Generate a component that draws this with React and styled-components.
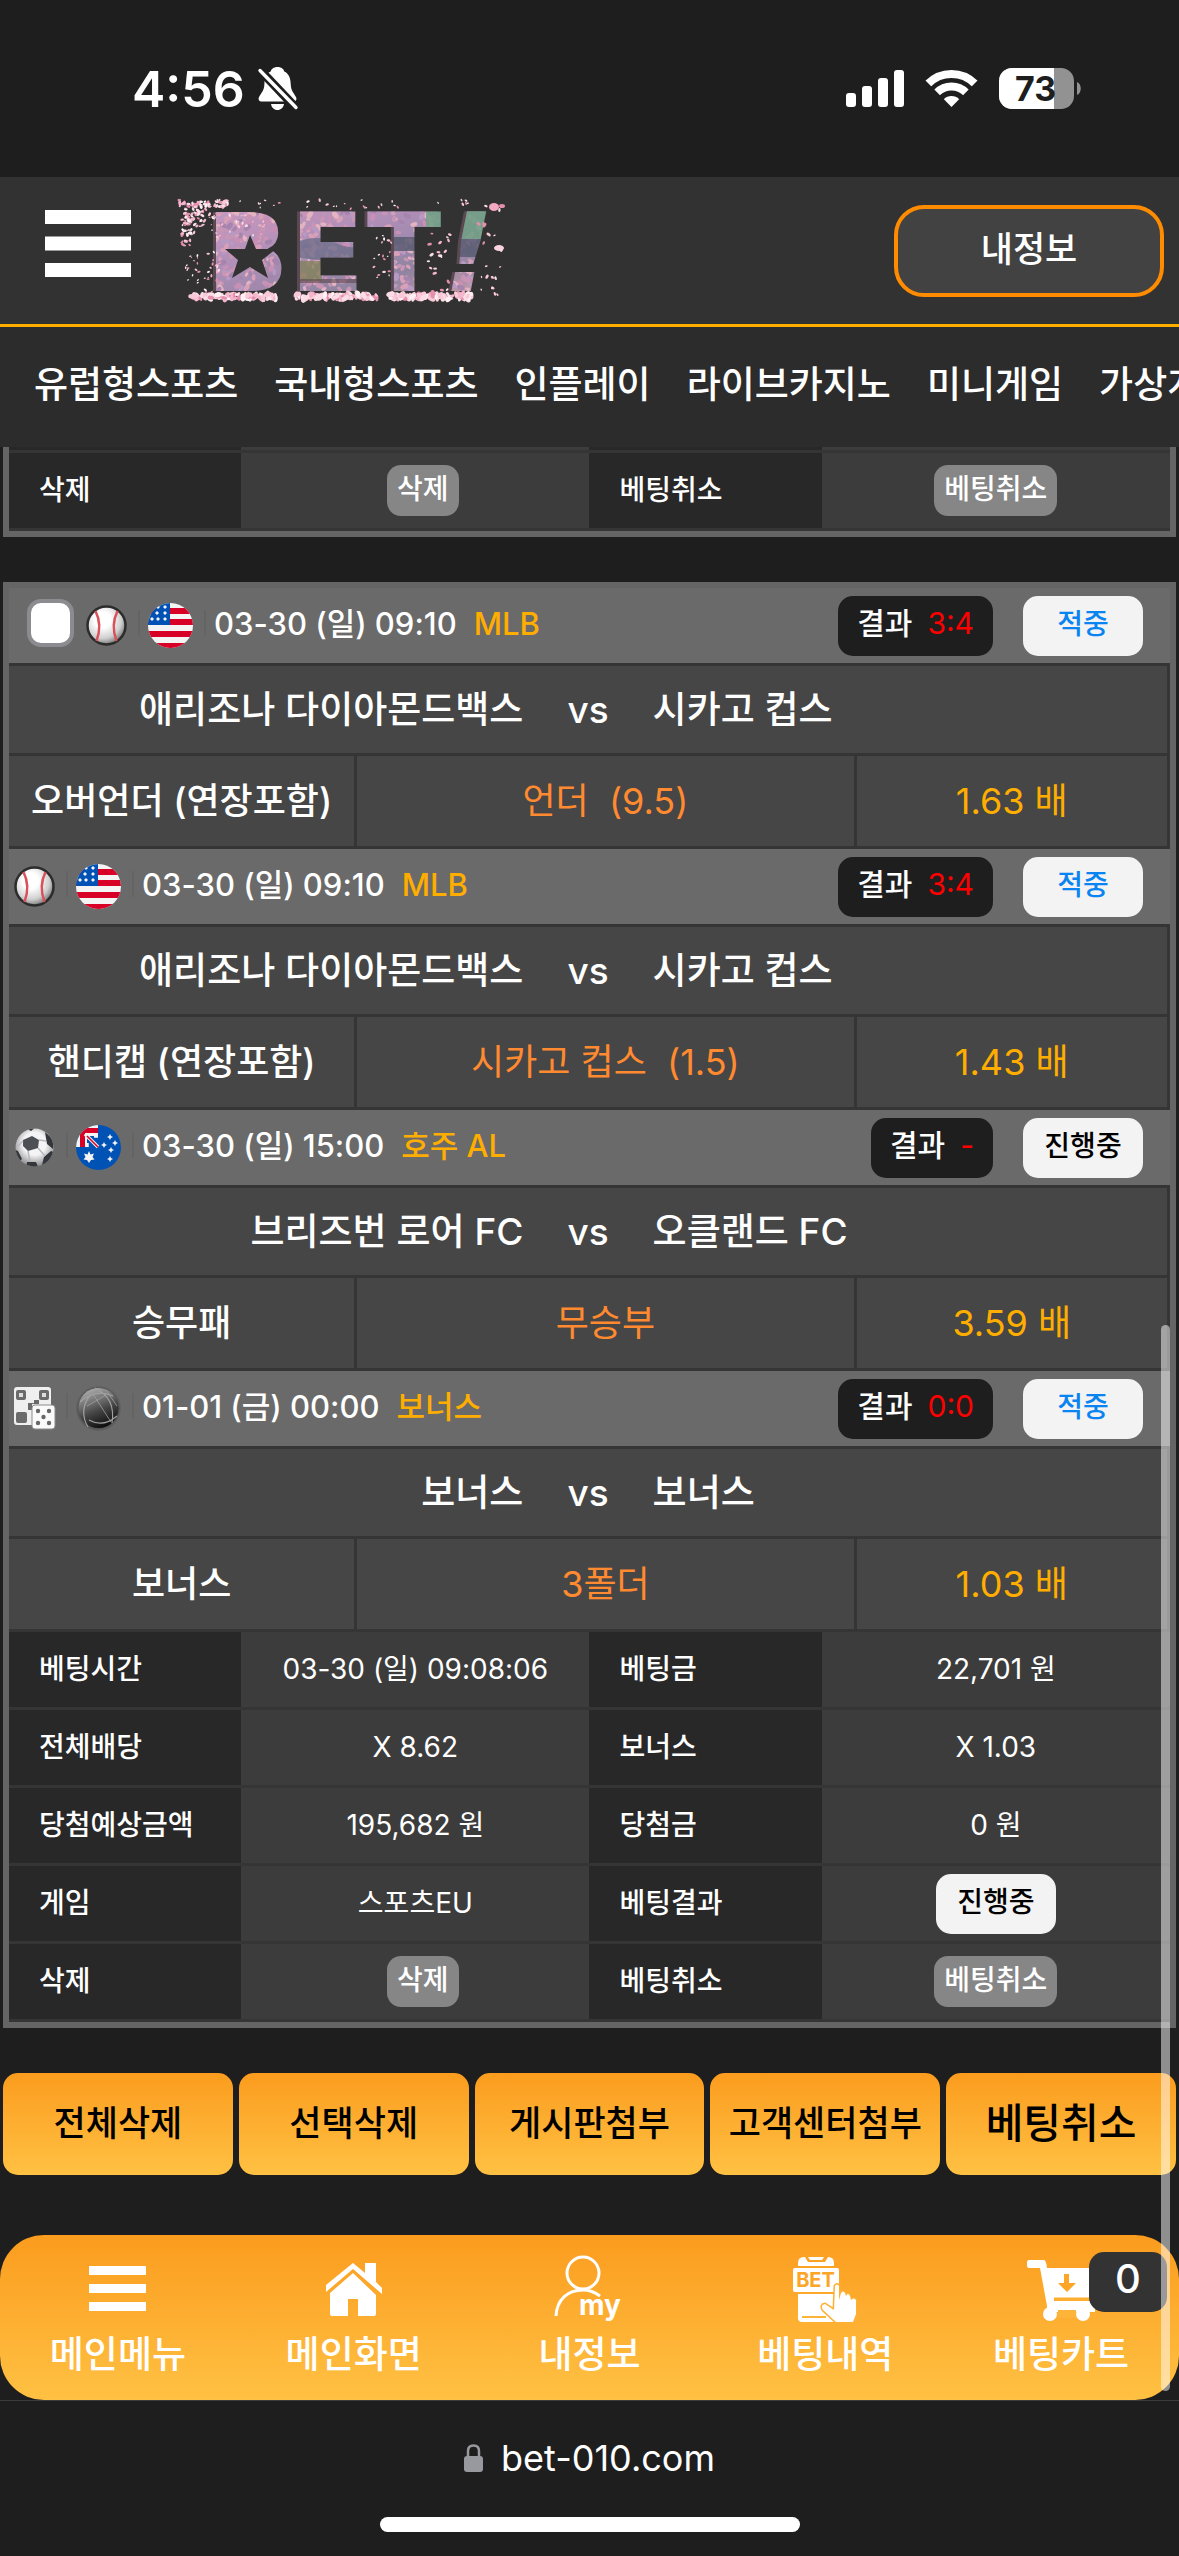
import React from "react";
import styled, { createGlobalStyle } from "styled-components";

const GlobalStyle = createGlobalStyle`
  *, *::before, *::after { box-sizing: border-box; }
  body {
    margin: 0;
    background: #1e1e1e;
    color: #fff;
    font-family: Inter, "Noto Sans CJK KR", sans-serif;
    font-weight: 500;
  }
  button, input { font: inherit; color: inherit; margin: 0; }
  svg { display: block; flex: none; overflow: visible; }
`;

const Screen = styled.div`
  position: relative;
  min-height: 100vh;
  display: flex;
  flex-direction: column;
  overflow: hidden;
`;

/* ---------- status bar ---------- */

const StatusBar = styled.div`
  height: 177px;
  padding: 0 98px 0 132px;
  display: flex;
  align-items: center;
  justify-content: space-between;
`;

const StatusGroup = styled.div`
  display: flex;
  align-items: center;
  gap: ${(p) => p.$gap}px;
`;

const Clock = styled.span`
  font-size: 50px;
  font-weight: 600;
  line-height: 60px;
`;

/* ---------- header ---------- */

const Header = styled.header`
  height: 150px;
  padding: 0 15px 0 45px;
  display: flex;
  align-items: center;
  background: #323232;
  border-bottom: 3px solid #ffae00;
`;

const MenuButton = styled.button`
  padding: 0 0 14px;
  border: 0;
  background: none;
`;

const LogoLink = styled.a`
  margin-left: 47px;
`;

const InfoButton = styled.button`
  width: 270px;
  height: 92px;
  margin-left: auto;
  padding: 0 0 8px;
  border: 4px solid #ff8c00;
  border-radius: 30px;
  background: #424242;
  font-size: 35px;
`;

const TopNav = styled.nav`
  height: 120px;
  padding: 0 0 4px 34px;
  display: flex;
  align-items: center;
  gap: 36px;
  overflow: hidden;
  background: #2c2c2c;
`;

const TopLink = styled.a`
  flex: none;
  color: #fff;
  font-size: 37px;
  line-height: 48px;
  white-space: nowrap;
  text-decoration: none;
`;

/* ---------- betting cards ---------- */

const Content = styled.main`
  padding: 0 3px;
  display: flex;
  flex-direction: column;
  gap: 45px;
`;

const Card = styled.section`
  border: 6px solid #656565;
  border-top-width: ${(p) => (p.$continued ? 0 : 6)}px;
`;

const MatchHead = styled.div`
  height: 78px;
  padding: 0 27px 0 5px;
  display: flex;
  align-items: center;
  background: #6a6a6a;
  border-bottom: 3px solid #353535;
  font-size: 31px;
  line-height: 40px;
`;

const Check = styled.input`
  appearance: none;
  width: 47px;
  height: 48px;
  && { margin: 0 12px 6px 13px; }
  border: 4px solid #8b8b90;
  border-radius: 14px;
  background: #fff;
`;

const Divider = styled.i`
  width: 2px;
  height: 26px;
  margin: 0 8px 6px 11px;
  background: #646464;
`;

const League = styled.span`
  margin-left: 17px;
  color: #ffae00;
`;

const HeadText = styled.div`
  padding-bottom: 4px;
  white-space: nowrap;
`;

const HeadBadges = styled.div`
  margin-left: auto;
  display: flex;
  gap: 30px;
`;

const ResultBadge = styled.span`
  height: 60px;
  padding: 0 19px 5px;
  display: flex;
  align-items: center;
  gap: 15px;
  border-radius: 15px;
  background: #1e1e1e;
  font-size: 30px;
`;

const Score = styled.b`
  color: #f00;
  font-weight: 400;
`;

const StateBadge = styled.span`
  width: 120px;
  height: 60px;
  padding-bottom: 4px;
  display: inline-flex;
  align-items: center;
  justify-content: center;
  border-radius: 15px;
  background: #f3f3f3;
  color: ${(p) => (p.$win ? "#0a84f0" : "#000")};
  font-size: 28px;
  line-height: 40px;
`;

const Teams = styled.div`
  height: 90px;
  display: grid;
  grid-template-columns: 1fr auto 1fr;
  column-gap: 44px;
  align-items: center;
  background: #464646;
  border: solid #353535;
  border-width: 0 3px 3px 0;
  font-size: 37px;
  line-height: 48px;
  white-space: nowrap;
`;

const Home = styled.span`
  text-align: right;
`;

const Pick = styled.div`
  height: 93px;
  display: grid;
  grid-template-columns: 30fr 43fr 27fr;
  background: #464646;
  border-bottom: 3px solid #353535;
  font-size: 36px;
  line-height: 48px;
  white-space: pre;
`;

const PickCell = styled.span`
  display: flex;
  align-items: center;
  justify-content: center;
  border-right: 3px solid #353535;
  color: ${(p) => p.$color || "#fff"};
  font-weight: ${(p) => (p.$color ? 400 : 500)};
`;

const InfoTable = styled.table`
  width: 100%;
  table-layout: fixed;
  border-collapse: separate;
  border-spacing: 0;
  font-size: 28px;
  line-height: 40px;
`;

const InfoLabel = styled.th`
  width: 20%;
  height: ${(p) => (p.$edge ? 6 : 78)}px;
  padding: 0 0 ${(p) => (p.$edge ? 0 : 2)}px 30px;
  background: #282828;
  border-bottom: 3px solid #353535;
  font-weight: 500;
  text-align: left;
  white-space: nowrap;
`;

const InfoValue = styled.td`
  width: 30%;
  padding: 0 0 ${(p) => (p.$text ? 2 : 0)}px ${(p) => (p.$indent ? 15 : 0)}px;
  background: #3c3c3c;
  border-bottom: 3px solid #353535;
  text-align: center;
  vertical-align: middle;
  white-space: nowrap;
  font-weight: 400;
`;

const SmallButton = styled.button`
  height: 51px;
  padding: 0 10px 4px;
  border: 0;
  border-radius: 14px;
  background: #868686;
  display: inline-block;
  vertical-align: middle;
  && { font-weight: 500; }
`;

const Middle = styled.div`
  display: flex;
  justify-content: center;
  font-weight: 500;
`;

/* ---------- actions ---------- */

const Actions = styled.div`
  display: grid;
  grid-template-columns: repeat(5, 1fr);
  gap: 6px;
`;

const ActionButton = styled.button`
  height: 102px;
  padding: 0 0 8px;
  border: 0;
  border-radius: 15px;
  background: linear-gradient(#fb9c1e, #ffc143);
  && {
    color: #000;
    font-size: ${(p) => (p.$large ? 41 : 35)}px;
  }
  white-space: nowrap;
`;

/* ---------- bottom navigation ---------- */

const BottomNav = styled.nav`
  position: relative;
  height: 165px;
  margin-top: 60px;
  display: grid;
  grid-template-columns: repeat(5, 1fr);
  border-radius: 44px;
  background: linear-gradient(#fb9c1e, #ffc143);
`;

const BottomLink = styled.a`
  padding-top: 20px;
  display: flex;
  flex-direction: column;
  align-items: center;
  gap: 6px;
  color: #fff;
  font-size: 37px;
  line-height: 48px;
  white-space: nowrap;
  text-decoration: none;
`;

const CartCount = styled.span`
  position: absolute;
  top: 17px;
  right: 12px;
  width: 78px;
  height: 60px;
  border-radius: 15px;
  background: #333;
  font-size: 40px;
  line-height: 54px;
  text-align: center;
`;

const BrowserBar = styled.footer`
  padding: 27px 0 24px;
  display: flex;
  flex-direction: column;
  align-items: center;
  gap: 29px;
  border-top: 1px solid #3c3c3c;
  font-weight: 400;
`;

const Address = styled.div`
  display: flex;
  align-items: center;
  gap: 18px;
  font-size: 36px;
  line-height: 60px;
`;

const HomeIndicator = styled.div`
  width: 420px;
  height: 15px;
  border-radius: 8px;
  background: #fff;
`;

const ScrollThumb = styled.div`
  position: absolute;
  top: 1325px;
  right: 9px;
  bottom: 165px;
  width: 9px;
  border-radius: 5px;
  background: rgba(255, 255, 255, 0.5);
`;

/* ---------- drawings ---------- */

const Bell = () => (
  <svg width="40" height="43" viewBox="0 0 40 43" aria-hidden="true">
    <path fill="#fff" d="M19.5 0c-4 0-6.300 2.200-6.800 4.600C8 6.500 6.600 11 6.400 17 6.200 24 3 26 .8 30.500.1 32.500 1 34.500 3.500 34.500h32c2.500 0 3.500-2 2.700-4C36 26 32.900 24 32.700 17c-.2-6-2-10.500-6.400-12.400C25.800 2.200 23.500 0 19.500 0zM13 37h13c-.6 3.500-3 6-6.500 6S13.600 40.500 13 37z" />
    <path d="M2 3 38 41" stroke="#1e1e1e" strokeWidth="9" />
    <path d="M2 3.500 38 40.500" stroke="#fff" strokeWidth="3.400" strokeLinecap="round" />
  </svg>
);

const Signal = () => (
  <svg width="58" height="37" viewBox="0 0 58 37" fill="#fff" aria-hidden="true">
    <rect x="0" y="23" width="10" height="14" rx="3" />
    <rect x="16" y="16" width="10" height="21" rx="3" />
    <rect x="32" y="8" width="10" height="29" rx="3" />
    <rect x="48" y="0" width="10" height="37" rx="3" />
  </svg>
);

const Wifi = () => (
  <svg width="51" height="37" viewBox="0 0 51 37" fill="none" stroke="#fff" aria-hidden="true">
    <clipPath id="wifi-wedge"><path d="M25.500 37-2 9V-2h55V9z" /></clipPath>
    <g clipPath="url(#wifi-wedge)">
      <circle cx="25.500" cy="37" r="33" strokeWidth="8" />
      <circle cx="25.500" cy="37" r="20.500" strokeWidth="8" />
      <circle cx="25.500" cy="37" r="11" fill="#fff" stroke="none" />
    </g>
  </svg>
);

const Battery = () => (
  <svg width="82" height="41" viewBox="0 0 82 41" role="img" aria-label="73%">
    <clipPath id="battery-shape"><rect width="75" height="41" rx="13" /></clipPath>
    <g clipPath="url(#battery-shape)">
      <rect width="75" height="41" fill="#929292" />
      <rect width="55" height="41" fill="#fff" />
    </g>
    <path d="M78 14c5 2 5 11 0 13z" fill="#929292" />
    <text x="36.500" y="33" textAnchor="middle" fontSize="34" fontWeight="700" fill="#1e1e1e">73</text>
  </svg>
);

const Bars = ({ width, height, bar }) => {
  const step = (height - bar) / 2;
  return (
    <svg width={width} height={height} fill="#fff" aria-hidden="true">
      {[0, 1, 2].map((i) => <rect key={i} y={i * step} width={width} height={bar} />)}
    </svg>
  );
};

const PINKS = ["#f4b6cc", "#fbdde6", "#e58fae", "#f9c9d8", "#fff0f4"];

function scatter(seed, count, x0, y0, x1, y1, size) {
  let s = seed;
  const next = () => {
    s = (s * 16807) % 2147483647;
    return s / 2147483647;
  };
  for (let i = 0; i < 5; i += 1) next();
  return Array.from({ length: count }, (_, i) => ({
    key: `${seed}-${i}`,
    x: Math.round((x0 + next() * (x1 - x0)) * 10) / 10,
    y: Math.round((y0 + next() * (y1 - y0)) * 10) / 10,
    r: size * (0.5 + next() * 0.6),
    a: Math.round(next() * 180),
    c: PINKS[Math.floor(next() * PINKS.length)],
  }));
}

const Petals = ({ items }) =>
  items.map((p) => (
    <ellipse key={p.key} cx={p.x} cy={p.y} rx={p.r} ry={p.r * 0.6} fill={p.c} transform={`rotate(${p.a} ${p.x} ${p.y})`} />
  ));

const CLOUD = ["#c98fb4", "#b79ac4", "#d7a0b8", "#a585ae", "#e3b3c0", "#c896b4"];
const texture = scatter(771, 620, 20, 12, 312, 92, 4).map((p, i) => ({ ...p, c: CLOUD[i % CLOUD.length] }));
const petals = [
  ...scatter(11, 50, 1, 1, 52, 8, 2.400),
  ...scatter(29, 46, 4, 8, 32, 28, 2.400),
  ...scatter(37, 22, 2, 26, 18, 50, 2.200),
  ...scatter(43, 34, 30, 14, 88, 40, 1.800),
  ...scatter(59, 36, 4, 50, 46, 94, 1.600),
  ...scatter(67, 30, 60, 1, 290, 10, 1.800),
  ...scatter(73, 80, 14, 95, 98, 100, 4),
  ...scatter(83, 80, 118, 95, 200, 100, 4),
  ...scatter(97, 80, 210, 95, 294, 100, 4),
  ...scatter(103, 18, 196, 34, 214, 80, 1.800),
  ...scatter(113, 18, 248, 34, 274, 92, 2.200),
  ...scatter(127, 22, 300, 4, 324, 98, 2.400),
];

const Logo = () => (
  <svg width="328" height="103" viewBox="0 0 328 103" role="img" aria-label="BET!">
    <defs>
      <linearGradient id="blossom" x1="0" y1="0" x2="1" y2="1">
        <stop offset="0" stopColor="#d59cc0" />
        <stop offset="0.400" stopColor="#b08fb8" />
        <stop offset="0.700" stopColor="#8f84a0" />
        <stop offset="1" stopColor="#d8a3a8" />
      </linearGradient>
      <pattern id="garden" width="328" height="103" patternUnits="userSpaceOnUse">
        <rect width="328" height="103" fill="url(#blossom)" />
        <Petals items={texture} />
        <path d="M118 44q20-10 40 0t42-4v16q-40 10-82 2z" fill="#666a85" opacity="0.700" />
        <path d="M120 62h24v20h-24z" fill="#7d8150" opacity="0.700" />
        <path d="M120 80h72v4h-72z" fill="#5b4650" opacity="0.600" />
        <path d="M248 12h34l-4 22h-30zM286 12h34l-4 28h-32z" fill="#6fa084" opacity="0.850" />
        <path d="M280 40h36v18h-36zM212 38h30v14h-30z" fill="#55596e" opacity="0.800" />
      </pattern>
      <filter id="logo-depth" x="-0.100" y="-0.100" width="1.200" height="1.200">
        <feDropShadow dx="-3" dy="0" stdDeviation="0" floodColor="#5a4a52" />
      </filter>
    </defs>
    <g filter="url(#logo-depth)" fill="url(#garden)" fontFamily="DejaVu Sans" fontWeight="700" fontSize="109">
      <text x="28" y="92">B</text>
      <text x="112" y="92">E</text>
      <text x="189" y="92">T</text>
      <text x="266" y="92" fontStyle="italic">!</text>
    </g>
    <path fill="url(#garden)" d="M50 24h38v60H50z" />
    <path fill="#323232" d="m72 36 6 14h20l-14 11 6 18-18-11-18 11 6-18-13-11h20z" />
    <Petals items={petals} />
    <ellipse cx="316" cy="8" rx="5" ry="4" fill="#f3a9c1" />
    <ellipse cx="321" cy="49" rx="5" ry="3" fill="#fbd3df" />
    <ellipse cx="324" cy="7" rx="3" ry="2" fill="#e58fae" />
  </svg>
);

const Baseball = () => (
  <svg width="41" height="41" viewBox="0 0 41 41" aria-hidden="true">
    <defs>
      <radialGradient id="ball-light" cx="0.400" cy="0.350" r="0.700">
        <stop offset="0.300" stopColor="#fff" />
        <stop offset="0.700" stopColor="#cfcfcf" />
        <stop offset="1" stopColor="#666" />
      </radialGradient>
    </defs>
    <circle cx="20.500" cy="20.500" r="19" fill="url(#ball-light)" stroke="#2c2c2c" strokeWidth="2.500" />
    <path d="M9.500 6q7 14 1 30M31.500 6q-7 14-1 30" fill="none" stroke="#d9515b" strokeWidth="2.500" />
  </svg>
);

const SoccerBall = () => (
  <svg width="41" height="41" viewBox="0 0 41 41" aria-hidden="true">
    <clipPath id="soccer-clip"><circle cx="20.500" cy="20.500" r="19" /></clipPath>
    <defs>
      <radialGradient id="soccer-light" cx="0.500" cy="0.400" r="0.600">
        <stop offset="0.500" stopColor="#f4f4f6" />
        <stop offset="1" stopColor="#8c8c90" />
      </radialGradient>
    </defs>
    <circle cx="20.500" cy="20.500" r="19" fill="url(#soccer-light)" />
    <g clipPath="url(#soccer-clip)" fill="#33363a">
      <path d="m9 13 9-4 7 4-1 8-10 3-5-5z" fill="#4c5054" />
      <path d="m31 5 9 8-1 9-6-5zM-1 22l5 2 4 8-5 4zM30 30l7-6 5 2-6 12-8 0zM13 35l9 0 3 7H12zM10 0h12l-5 4z" />
      <path d="m24 21 7 8M14 24l2 10M25 13l7 1M9 14l-6 6" stroke="#b9b9bd" strokeWidth="1.500" fill="none" />
    </g>
  </svg>
);

const Dice = () => (
  <svg width="41" height="45" viewBox="0 0 41 45" aria-hidden="true">
    <rect x="0" y="1" width="37" height="38" rx="3" fill="#efefef" />
    <g fill="#6b6b6b">
      <rect x="2" y="4" width="10" height="10" rx="2" />
      <rect x="25" y="4" width="10" height="10" rx="2" />
      <rect x="2" y="26" width="11" height="11" rx="2" />
      <path d="M14 17h6v-3h5v4h-7v6h-4z" />
    </g>
    <rect x="5" y="7" width="4" height="4" fill="#ddd" />
    <rect x="28" y="7" width="4" height="4" fill="#ddd" />
    <rect x="18" y="19" width="23" height="24" rx="3" fill="#fafafa" stroke="#8b8b8b" />
    <g fill="#666">
      <circle cx="24" cy="25" r="2.200" /><circle cx="35" cy="25" r="2.200" />
      <circle cx="29.500" cy="31" r="2.200" />
      <circle cx="24" cy="37" r="2.200" /><circle cx="35" cy="37" r="2.200" />
    </g>
  </svg>
);

const FlagUS = () => (
  <svg width="45" height="45" viewBox="0 0 45 45" role="img" aria-label="USA">
    <clipPath id="us-clip"><circle cx="22.500" cy="22.500" r="22.500" /></clipPath>
    <g clipPath="url(#us-clip)">
      <rect width="45" height="45" fill="#f4f4f4" />
      {[5, 16, 28, 40].map((y) => <rect key={y} y={y} width="45" height="6" fill="#d80027" />)}
      <rect width="22" height="22" fill="#0052b4" />
      {[[10, 4], [17, 4], [9, 10], [17, 10], [4, 16], [10, 16], [17, 16]].map(([x, y]) => (
        <path key={`${x}-${y}`} fill="#f4f4f4" d={`m${x} ${y - 2} 2 2-2 2-2-2z`} />
      ))}
    </g>
  </svg>
);

const FlagAU = () => (
  <svg width="45" height="45" viewBox="0 0 45 45" role="img" aria-label="Australia">
    <clipPath id="au-clip"><circle cx="22.500" cy="22.500" r="22.500" /></clipPath>
    <g clipPath="url(#au-clip)">
      <rect width="45" height="45" fill="#0052b4" />
      <rect width="22" height="22" fill="#f4f4f4" />
      <path d="M0 3h22v5H0zM4 0h5v22H4z" fill="#d80027" />
      <path d="M11 11h11v11H11z" fill="#0052b4" />
      <path d="m9 9 13 13M11 18v4M18 11h4" stroke="#f4f4f4" strokeWidth="3.500" />
      <path d="m11 11 11 11" stroke="#d80027" strokeWidth="1.500" />
      <path fill="#f4f4f4" d="m13 26 1.500 3.500 3.500-1-1.500 3.500 2 2.500-3.500.5-2 3-2-3-3.500-.5 2-2.500L8 28.500l3.500 1z" />
      {[[34, 12], [28, 20], [39, 18], [35, 25], [34, 34]].map(([x, y]) => (
        <path key={`${x}-${y}`} fill="#f4f4f4" d={`m${x} ${y - 3} 1 2 2 1-2 1-1 2-1-2-2-1 2-1z`} />
      ))}
    </g>
  </svg>
);

const Globe = () => (
  <svg width="45" height="45" viewBox="0 0 45 45" role="img" aria-label="보너스">
    <defs>
      <linearGradient id="globe-shade" x1="0.200" y1="0" x2="0.600" y2="1">
        <stop offset="0" stopColor="#b5b5b5" />
        <stop offset="0.600" stopColor="#444" />
        <stop offset="1" stopColor="#0c0c0c" />
      </linearGradient>
      <radialGradient id="globe-shadow">
        <stop offset="0.700" stopColor="#333" />
        <stop offset="1" stopColor="#333" stopOpacity="0" />
      </radialGradient>
    </defs>
    <circle cx="22.500" cy="22.500" r="23" fill="url(#globe-shadow)" />
    <circle cx="22.500" cy="22" r="20" fill="url(#globe-shade)" />
    <g fill="none" stroke="#a0a0a0" strokeWidth="1.200">
      <path d="M4 16Q20 2 37 10M19 2Q40 12 36 37M15 8Q2 24 12 41M13 34q14 8 28-4" />
      <path d="m17 8 18 28M30 9 11 20M30 4l11 16" strokeWidth="0.800" />
    </g>
  </svg>
);

const HomeIcon = () => (
  <svg width="56" height="70" viewBox="0 0 56 70" fill="#fff" aria-hidden="true">
    <path d="M0 30 27 8l12 10V8h11v19l6 6v6L27 14 0 37z" />
    <path d="M4 38 27 18l23 22v19q0 2-2 2H32V44H22v17H6q-2 0-2-2z" />
  </svg>
);

const MyIcon = () => (
  <svg width="70" height="70" viewBox="0 0 70 70" fill="none" stroke="#fff" strokeWidth="3" aria-hidden="true">
    <circle cx="29" cy="18" r="16" />
    <path d="M2 61C3 44 14 35 29 35q9 0 17 6" />
    <text x="25" y="60" fontSize="28" fontWeight="700" fill="#fff" stroke="none">my</text>
  </svg>
);

const BetIcon = () => (
  <svg width="64" height="70" viewBox="0 0 64 70" fill="#fff" aria-hidden="true">
    <path d="M5 11V8q0-6 6-6h1l3 5h17l3-5q6 0 6 6v3zM15 2h16l-2 3H17z" />
    <rect x="0" y="13" width="46" height="24" rx="2" />
    <text x="22.500" y="32" textAnchor="middle" fontSize="20" fontWeight="700" fill="#fca526">BET</text>
    <path d="M5 39h36v28H9q-4 0-4-4z" />
    <path d="M9 62h24" stroke="#fdb437" strokeWidth="2" />
    <path stroke="#fdb033" strokeWidth="3" paintOrder="stroke" d="M42 31q2-3 4 0v14l2-7q2-3 4 0l1 3q2-4 4 0l1 4q3-3 5 0v14l-3 8H43L30 55q-3-5 2-6l9 6z" />
  </svg>
);

const CartIcon = () => (
  <svg width="68" height="70" viewBox="0 0 68 70" fill="#fff" aria-hidden="true">
    <path d="M2 5h15q2 0 3 8h48v30H27v3h41v11H20v-6L13 13H2q-2 0-2-2V7q0-2 2-2z" />
    <circle cx="23" cy="59" r="7" />
    <circle cx="56" cy="59" r="7" />
    <path d="M31 55h18v8H31z" fill="#fdb439" />
    <path d="M27 44h35" stroke="#fdae31" strokeWidth="3" />
    <path d="M37 19h5v9h7l-9 9-9-9h6z" fill="#fca526" />
  </svg>
);

const TabBars = () => (
  <svg width="57" height="70" fill="#fff" aria-hidden="true">
    <path d="M0 11h57v9H0zM0 29h57v9H0zM0 47h57v9H0z" />
  </svg>
);

const Lock = () => (
  <svg width="19" height="28" viewBox="0 0 19 28" aria-hidden="true">
    <path d="M4 13V7q0-5.500 5.500-5.500T15 7v6" fill="none" stroke="#98989f" strokeWidth="2.500" />
    <rect y="12" width="19" height="16" rx="3" fill="#98989f" />
  </svg>
);

/* ---------- data ---------- */

const MENU = ["유럽형스포츠", "국내형스포츠", "인플레이", "라이브카지노", "미니게임", "가상게임"];

const MATCHES = [
  { sport: <Baseball />, flag: <FlagUS />, time: "03-30 (일) 09:10", league: "MLB", score: "3:4", state: "적중", home: "애리조나 다이아몬드백스", away: "시카고 컵스", type: "오버언더 (연장포함)", pick: "언더  (9.5)", odds: "1.63 배", selectable: true },
  { sport: <Baseball />, flag: <FlagUS />, time: "03-30 (일) 09:10", league: "MLB", score: "3:4", state: "적중", home: "애리조나 다이아몬드백스", away: "시카고 컵스", type: "핸디캡 (연장포함)", pick: "시카고 컵스  (1.5)", odds: "1.43 배" },
  { sport: <SoccerBall />, flag: <FlagAU />, time: "03-30 (일) 15:00", league: "호주 AL", score: "-", state: "진행중", home: "브리즈번 로어 FC", away: "오클랜드 FC", type: "승무패", pick: "무승부", odds: "3.59 배" },
  { sport: <Dice />, flag: <Globe />, time: "01-01 (금) 00:00", league: "보너스", score: "0:0", state: "적중", home: "보너스", away: "보너스", type: "보너스", pick: "3폴더", odds: "1.03 배" },
];

const DETAILS = [
  ["베팅시간", "03-30 (일) 09:08:06", "베팅금", "22,701 원"],
  ["전체배당", "X 8.62", "보너스", "X 1.03"],
  ["당첨예상금액", "195,682 원", "당첨금", "0 원"],
];

const ACTIONS = ["전체삭제", "선택삭제", "게시판첨부", "고객센터첨부", "베팅취소"];

const TABS = [
  { label: "메인메뉴", icon: <TabBars /> },
  { label: "메인화면", icon: <HomeIcon /> },
  { label: "내정보", icon: <MyIcon /> },
  { label: "베팅내역", icon: <BetIcon /> },
  { label: "베팅카트", icon: <CartIcon /> },
];

const Match = ({ match }) => (
  <article>
    <MatchHead>
      {match.selectable && <Check type="checkbox" aria-label="선택" />}
      {match.sport}
      <Divider />
      {match.flag}
      <Divider />
      <HeadText>
        {match.time}
        <League>{match.league}</League>
      </HeadText>
      <HeadBadges>
        <ResultBadge>
          결과 <Score>{match.score}</Score>
        </ResultBadge>
        <StateBadge $win={match.state === "적중"}>{match.state}</StateBadge>
      </HeadBadges>
    </MatchHead>
    <Teams>
      <Home>{match.home}</Home>
      <span>vs</span>
      <span>{match.away}</span>
    </Teams>
    <Pick>
      <PickCell>{match.type}</PickCell>
      <PickCell $color="#ff8a30">{match.pick}</PickCell>
      <PickCell $color="#ffae00">{match.odds}</PickCell>
    </Pick>
  </article>
);

const ManageRow = () => (
  <tr>
    <InfoLabel scope="row">삭제</InfoLabel>
    <InfoValue $indent>
      <SmallButton type="button">삭제</SmallButton>
    </InfoValue>
    <InfoLabel scope="row">베팅취소</InfoLabel>
    <InfoValue>
      <SmallButton type="button">베팅취소</SmallButton>
    </InfoValue>
  </tr>
);

export default function App() {
  return (
    <Screen>
      <GlobalStyle />
      <StatusBar>
        <StatusGroup $gap={13}>
          <Clock>4:56</Clock>
          <Bell />
        </StatusGroup>
        <StatusGroup $gap={22}>
          <Signal />
          <Wifi />
          <Battery />
        </StatusGroup>
      </StatusBar>

      <Header>
        <MenuButton type="button" aria-label="메뉴">
          <Bars width={86} height={67} bar={14} />
        </MenuButton>
        <LogoLink href="#home">
          <Logo />
        </LogoLink>
        <InfoButton type="button">내정보</InfoButton>
      </Header>

      <TopNav>
        {MENU.map((item) => (
          <TopLink key={item} href="#menu">{item}</TopLink>
        ))}
      </TopNav>

      <Content>
        <Card $continued>
          <InfoTable>
            <tbody>
              <tr aria-hidden="true">
                <InfoLabel as="td" $edge />
                <InfoValue />
                <InfoLabel as="td" $edge />
                <InfoValue />
              </tr>
              <ManageRow />
            </tbody>
          </InfoTable>
        </Card>

        <Card>
          {MATCHES.map((match, i) => (
            <Match key={i} match={match} />
          ))}
          <InfoTable>
            <tbody>
              {DETAILS.map(([a, av, b, bv]) => (
                <tr key={a}>
                  <InfoLabel scope="row">{a}</InfoLabel>
                  <InfoValue $text>{av}</InfoValue>
                  <InfoLabel scope="row">{b}</InfoLabel>
                  <InfoValue $text>{bv}</InfoValue>
                </tr>
              ))}
              <tr>
                <InfoLabel scope="row">게임</InfoLabel>
                <InfoValue $text>스포츠EU</InfoValue>
                <InfoLabel scope="row">베팅결과</InfoLabel>
                <InfoValue>
                  <Middle>
                    <StateBadge>진행중</StateBadge>
                  </Middle>
                </InfoValue>
              </tr>
              <ManageRow />
            </tbody>
          </InfoTable>
        </Card>

        <Actions>
          {ACTIONS.map((label, i) => (
            <ActionButton key={label} type="button" $large={i === ACTIONS.length - 1}>
              {label}
            </ActionButton>
          ))}
        </Actions>
      </Content>

      <BottomNav>
        {TABS.map((tab) => (
          <BottomLink key={tab.label} href="#tab">
            {tab.icon}
            {tab.label}
          </BottomLink>
        ))}
        <CartCount>0</CartCount>
      </BottomNav>

      <BrowserBar>
        <Address>
          <Lock />
          bet-010.com
        </Address>
        <HomeIndicator />
      </BrowserBar>
      <ScrollThumb />
    </Screen>
  );
}
